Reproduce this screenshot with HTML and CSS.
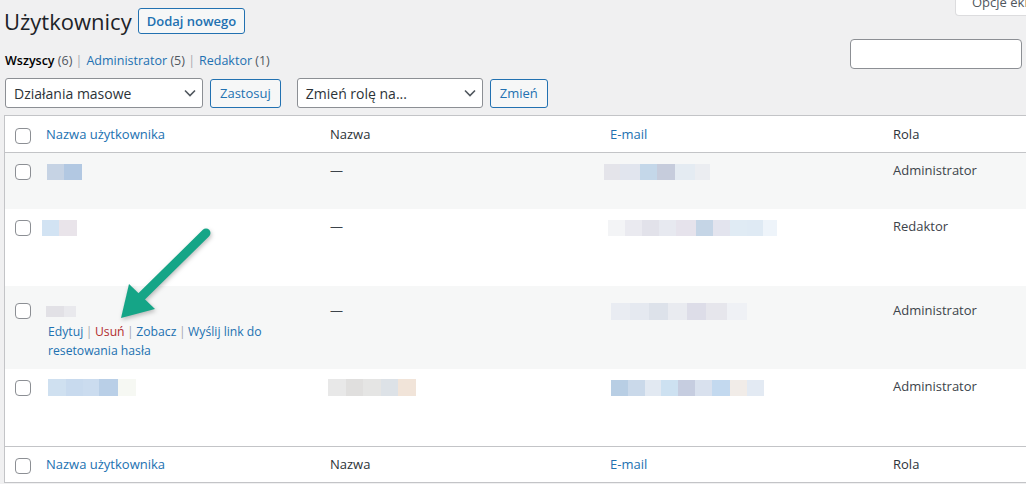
FILE: index.html
```html
<!DOCTYPE html>
<html lang="pl">
<head>
  <meta charset="UTF-8" />
  <meta name="viewport" content="width=device-width, initial-scale=1.0"/>
  <title>Użytkownicy</title>
  <link rel="stylesheet" href="styles.css">
</head>
<body>
  <div class="wrap">
    <div class="page-head">
      <h1>Użytkownicy</h1>
      <a class="title-action" href="#">Dodaj nowego</a>
      <span class="screen-options">Opcje ekranu</span>
    </div>

    <div class="filter-row">
      <ul class="subsubsub">
        <li><a class="current" href="#">Wszyscy <span class="count">(6)</span></a> |</li>
        <li><a href="#">Administrator <span class="count">(5)</span></a> |</li>
        <li><a href="#">Redaktor <span class="count">(1)</span></a></li>
      </ul>
      <div class="search-box">
        <input type="search">
        <button class="btn">Szukaj użytkowników</button>
      </div>
    </div>

    <div class="tablenav">
      <div class="select bulk">
        <span>Działania masowe</span>
        <svg width="12" height="8" viewBox="0 0 12 8"><path d="M1 1.5l5 5 5-5" fill="none" stroke="#50575e" stroke-width="1.6"/></svg>
      </div>
      <button class="btn">Zastosuj</button>
      <div class="select role">
        <span>Zmień rolę na...</span>
        <svg width="12" height="8" viewBox="0 0 12 8"><path d="M1 1.5l5 5 5-5" fill="none" stroke="#50575e" stroke-width="1.6"/></svg>
      </div>
      <button class="btn">Zmień</button>
    </div>

    <table class="users">
      <thead>
        <tr>
          <th class="check-column"><input type="checkbox"></th>
          <th class="col-username"><a href="#">Nazwa użytkownika</a></th>
          <th class="col-name">Nazwa</th>
          <th class="col-email"><a href="#">E-mail</a></th>
          <th class="col-role">Rola</th>
          <th class="col-posts">Wpisy</th>
        </tr>
      </thead>
      <tbody>
        <tr class="alt">
          <th class="check-column"><input type="checkbox"></th>
          <td><span class="blur u1"></span><div class="row-actions"></div></td>
          <td>—</td>
          <td><span class="blur e1"></span></td>
          <td>Administrator</td>
          <td>0</td>
        </tr>
        <tr class="tall">
          <th class="check-column"><input type="checkbox"></th>
          <td><span class="blur u2"></span><div class="row-actions"></div></td>
          <td>—</td>
          <td><span class="blur e2"></span></td>
          <td>Redaktor</td>
          <td>0</td>
        </tr>
        <tr class="alt open">
          <th class="check-column"><input type="checkbox"></th>
          <td>
            <span class="blur u3"></span>
            <div class="row-actions visible">
              <a href="#">Edytuj</a><span class="sep">|</span><a class="delete" href="#">Usuń</a><span class="sep">|</span><a href="#">Zobacz</a><span class="sep">|</span><a href="#">Wyślij link do resetowania hasła</a>
            </div>
          </td>
          <td>—</td>
          <td><span class="blur e3"></span></td>
          <td>Administrator</td>
          <td>0</td>
        </tr>
        <tr class="tall">
          <th class="check-column"><input type="checkbox"></th>
          <td><span class="blur u4"></span><div class="row-actions"></div></td>
          <td><span class="blur n4"></span></td>
          <td><span class="blur e4"></span></td>
          <td>Administrator</td>
          <td>0</td>
        </tr>
      </tbody>
      <tfoot>
        <tr>
          <th class="check-column"><input type="checkbox"></th>
          <th><a href="#">Nazwa użytkownika</a></th>
          <th>Nazwa</th>
          <th><a href="#">E-mail</a></th>
          <th>Rola</th>
          <th>Wpisy</th>
        </tr>
      </tfoot>
    </table>
  </div>

  <svg class="pointer" width="120" height="110" viewBox="100 220 120 110">
    <line x1="206" y1="233" x2="140" y2="298" stroke="#15a587" stroke-width="9" stroke-linecap="round"/>
    <polygon points="121,318 129,284 155,309" fill="#15a587"/>
  </svg>
</body>
</html>
```

FILE: styles.css
```css
html, body {
  overflow: hidden;
}

body {
  margin: 0;
  background: #f0f0f1;
  color: #3c434a;
  font-family: 'Open Sans', sans-serif;
  font-size: 13px;
  line-height: 19px;
  position: relative;
}

a {
  color: #2271b1;
  text-decoration: none;
}

.wrap {
  width: 1170px;
  padding-left: 4px;
}

/* heading */

.page-head {
  display: flex;
  align-items: center;
  padding-top: 6px;
}

.page-head h1 {
  margin: 0 6px 0 0;
  font-size: 22px;
  font-weight: 400;
  line-height: 30px;
  color: #1d2327;
}

.title-action {
  border: 1px solid #2271b1;
  border-radius: 3px;
  background: #f6f7f7;
  padding: 3px 8px;
  font-weight: 600;
  line-height: 18px;
}

.screen-options {
  align-self: flex-start;
  margin: -17px -35px 0 auto;
  width: 220px;
  padding: 4px 16px 3px 16px;
  background: #fff;
  border: 1px solid #dcdcde;
  border-top: none;
  border-radius: 0 0 4px 4px;
  color: #50575e;
}

/* views + search */

.filter-row {
  display: flex;
  align-items: flex-start;
}

.subsubsub {
  list-style: none;
  margin: 0;
  padding: 15px 0 0 1px;
  display: flex;
  gap: 4px;
  color: #a7aaad;
  font-size: 12.5px;
}

.subsubsub .current {
  color: #000;
  font-weight: 600;
}

.subsubsub .count {
  color: #50575e;
  font-weight: 400;
}

.search-box {
  margin: 3px 0 0 auto;
  display: flex;
  gap: 4px;
}

.search-box input {
  width: 172px;
  height: 30px;
  box-sizing: border-box;
  border: 1px solid #8c8f94;
  border-radius: 4px;
  background: #fff;
}

/* bulk actions */

.tablenav {
  display: flex;
  align-items: center;
  margin-top: 8px;
  padding-left: 1px;
}

.select {
  display: flex;
  align-items: center;
  justify-content: space-between;
  box-sizing: border-box;
  height: 30px;
  padding: 0 6px 0 8px;
  background: #fff;
  border: 1px solid #8c8f94;
  border-radius: 3px;
  color: #2c3338;
  font-size: 14px;
}

.select.bulk {
  width: 198px;
  margin-right: 7px;
}

.select.role {
  width: 186px;
  margin-right: 7px;
}

.btn {
  height: 29px;
  padding: 0 9px;
  border: 1px solid #2271b1;
  border-radius: 3px;
  background: #f6f7f7;
  color: #2271b1;
  font-family: inherit;
  font-size: 13px;
}

.tablenav .btn:nth-of-type(1) {
  margin-right: 16px;
}

/* table */

.users {
  margin-top: 7px;
  width: 100%;
  table-layout: fixed;
  border-collapse: separate;
  border-spacing: 0;
  background: #fff;
  border: 1px solid #c3c4c7;
}

.users th,
.users td {
  text-align: left;
  vertical-align: top;
  font-weight: 400;
  padding: 8px 10px;
}

.users thead th,
.users tfoot th {
  color: #2c3338;
}

.users thead th {
  padding-top: 9px;
  border-bottom: 1px solid #c3c4c7;
}

.users tfoot th {
  border-top: 1px solid #c3c4c7;
}

.users .check-column {
  width: 31px;
  padding: 11px 0 0 10px;
  box-sizing: border-box;
}

.users thead .check-column {
  padding-top: 12px;
}

.col-username { width: 264px; }
.col-name { width: 260px; }
.col-email { width: 263px; }
.col-role { width: 200px; }

.users tbody tr.alt {
  background: #f6f7f7;
}

.users tbody tr.tall td,
.users tbody tr.tall th {
  height: 61px;
}

.users tbody tr.open td {
  padding-top: 15px;
  padding-bottom: 9px;
}

.users tbody tr.open .check-column {
  padding-top: 17px;
}

.users tfoot .check-column {
  padding-top: 11px;
}

input[type="checkbox"] {
  appearance: none;
  display: block;
  margin: 0;
  width: 16px;
  height: 16px;
  border: 1px solid #8c8f94;
  border-radius: 4px;
  background: #fff;
}

.row-actions {
  padding-top: 2px;
  min-height: 19px;
  color: #a7aaad;
}

.row-actions.visible {
  padding-left: 2px;
  font-size: 12.2px;
}

.row-actions .sep {
  margin: 0 2.5px;
}

.row-actions .delete {
  color: #b32d2e;
}

/* redacted values */

.blur {
  display: inline-block;
  height: 16px;
  vertical-align: middle;
  filter: blur(0.6px);
}

.u1 {
  width: 35px;
  margin-left: 1px;
  background: linear-gradient(90deg, #c6d3e4 0 50%, #b2c8e2 50%);
}

.u2 {
  width: 35px;
  margin-left: -4px;
  background: linear-gradient(90deg, #d2e3f3 0 50%, #e9e4ea 50%);
}

.u3 {
  width: 30px;
  height: 11px;
  background: linear-gradient(90deg, #e2e1e6 0 60%, #e9e9ed 60%);
}

.u4 {
  width: 88px;
  height: 17px;
  margin-left: 2px;
  background: linear-gradient(90deg, #cfe0f0 0 20%, #c8daee 20% 40%, #cbdcef 40% 58%, #b9cfe7 58% 80%, #f6f8f3 80%);
}

.n4 {
  width: 88px;
  height: 17px;
  margin-left: -2px;
  background: linear-gradient(90deg, #e8e8e8 0 20%, #e0dfde 20% 40%, #e5e5e4 40% 60%, #dde2e7 60% 80%, #f1e4d9 80%);
}

.e1 {
  width: 106px;
  margin-left: -6px;
  background: linear-gradient(90deg, #e4e4ea 0 15%, #e1e5ee 15% 34%, #c4d7e9 34% 50%, #c6ccdc 50% 67%, #e4ebf2 67% 86%, #ebedf1 86%);
}

.e2 {
  width: 169px;
  margin-left: -2px;
  background: linear-gradient(90deg, #f3f4f6 0 10%, #eaeaf0 10% 20%, #e2e2ea 20% 30%, #e7e9f0 30% 40%, #e6e3ec 40% 52%, #c5d5e6 52% 62%, #e3e4ee 62% 72%, #e0ebf4 72% 82%, #dfeaf4 82% 92%, #eef4fa 92%);
}

.e3 {
  width: 136px;
  height: 17px;
  margin-left: 1px;
  background: linear-gradient(90deg, #e9ecf2 0 14%, #e5e9f0 14% 28%, #dde2ea 28% 42%, #e9ebf0 42% 56%, #dddde8 56% 70%, #e6e6ec 70% 85%, #eff1f5 85%);
}

.e4 {
  width: 153px;
  margin-left: 1px;
  background: linear-gradient(90deg, #b8cee4 0 11%, #cad9ea 11% 22%, #e2e9f2 22% 33%, #cde1f1 33% 44%, #c6cde0 44% 55%, #d9e1ee 55% 66%, #c3d9ef 66% 78%, #f1ece8 78% 89%, #e3eaf3 89%);
}

/* annotation arrow */

.pointer {
  position: absolute;
  left: 100px;
  top: 220px;
  filter: drop-shadow(1px 2px 2px rgba(0, 0, 0, 0.25));
}
```
